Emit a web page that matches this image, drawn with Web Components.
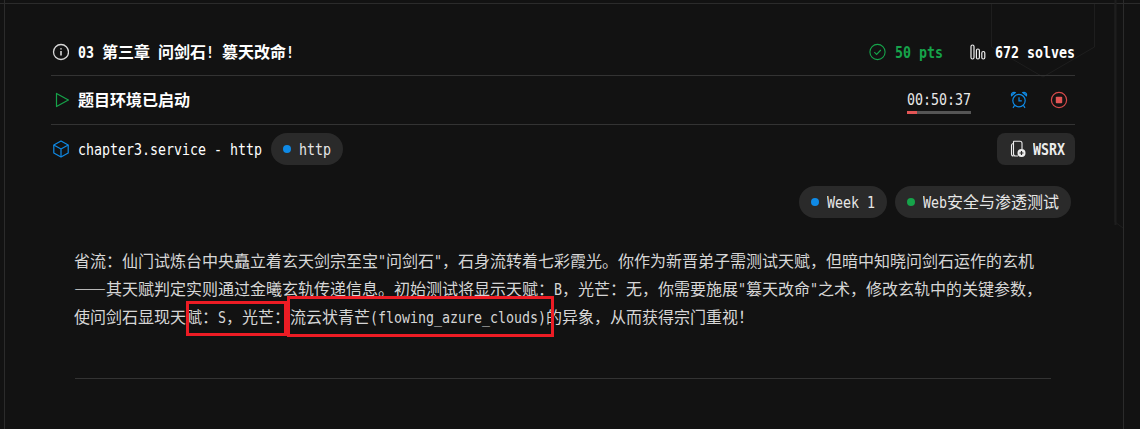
<!DOCTYPE html>
<html lang="zh">
<head>
<meta charset="utf-8">
<title>问剑石</title>
<style>
  html, body { margin: 0; background: #121212; }
</style>
</head>
<body>
<challenge-panel>
  <panel-row first>
    <svg slot="icon" width="18" height="18" viewBox="0 0 18 18" fill="none" stroke="#d8d8d8" stroke-width="1.300"><circle cx="10" cy="9" r="7.500"/><path d="M10 8v4.600" stroke-width="1.600"/><path d="M10 5.200v1.300" stroke-width="1.600"/></svg>
    <mono-text slot="title" bold>03 第三章 问剑石! 篡天改命!</mono-text>
    <svg width="18" height="18" viewBox="0 0 18 18" fill="none" stroke="#16a34a" stroke-width="1.100"><circle cx="8.500" cy="9" r="7.600"/><path d="M5.300 9.200l2.300 2.200 4.200-4.400"/></svg>
    <mono-text bold style="color:#16a34a;margin:0 27px 0 8px">50 pts</mono-text>
    <svg width="16" height="16" viewBox="0 0 16 16" fill="none" stroke="#eee" stroke-width="1.200"><rect x="1" y="1" width="3" height="14" rx="1.500"/><rect x="6.400" y="5" width="3" height="10" rx="1.500"/><rect x="11.800" y="7.500" width="3" height="7.500" rx="1.500"/></svg>
    <mono-text bold style="color:#fff;margin-left:9px">672 solves</mono-text>
  </panel-row>
  <panel-row>
    <svg slot="icon" width="18" height="18" viewBox="0 0 18 18" fill="none" stroke="#16a34a" stroke-width="1.200"><path d="M5.500 2.400v13.200L17.400 9z" stroke-linejoin="round"/></svg>
    <mono-text slot="title" bold>题目环境已启动</mono-text>
    <count-down value="00:50:37"></count-down>
    <svg style="margin-left:39px" width="18" height="18" viewBox="0 0 18 18" fill="none" stroke="#0f8ae6" stroke-width="1.200"><circle cx="9" cy="9.600" r="6.200"/><path d="M9 6.200v3.600h2.800"/><path d="M1.600 4.800a2.600 2.600 0 0 1 3.600-3.200zM16.400 4.800a2.600 2.600 0 0 0-3.600-3.200zM4.600 14.400l-1.600 2.400M13.400 14.400l1.600 2.400"/></svg>
    <svg style="margin:0 7px 0 22px" width="18" height="18" viewBox="0 0 18 18"><circle cx="9" cy="9" r="7.600" fill="none" stroke="#d64a4a" stroke-width="1.200"/><rect x="5.800" y="5.800" width="6.400" height="6.400" rx=".8" fill="#e25555"/></svg>
  </panel-row>
  <panel-row plain>
    <svg slot="icon" width="18" height="18" viewBox="0 0 18 18" fill="none" stroke="#0f8ae6" stroke-width="1.200" stroke-linejoin="round"><path d="M10 1l7.200 4v8L10 17l-7.200-4V5z"/><path d="M2.800 5L10 9l7.200-4M10 9v8"/></svg>
    <span slot="title" style="display:flex;align-items:center;gap:9px">
      <mono-text>chapter3.service - http</mono-text>
      <tag-pill color="#0f8ae6">http</tag-pill>
    </span>
    <wsrx-button>WSRX</wsrx-button>
  </panel-row>
  <tag-list>
    <tag-pill color="#0f8ae6">Week 1</tag-pill>
    <tag-pill color="#16a34a">Web安全与渗透测试</tag-pill>
  </tag-list>
  <challenge-text>
    <mono-text>省流：仙门试炼台中央矗立着玄天剑宗至宝"问剑石"，石身流转着七彩霞光。你作为新晋弟子需测试天赋，但暗中知晓问剑石运作的玄机——其天赋判定实则通过金曦玄轨传递信息。初始测试将显示天赋：B，光芒：无，你需要施展"篡天改命"之术，修改玄轨中的关键参数，使问剑石显现天赋：S，光芒：流云状青芒(flowing_azure_clouds)的异象，从而获得宗门重视！</mono-text>
  </challenge-text>
</challenge-panel>

<script>
  const MONO = "'DejaVu Sans Mono', 'Noto Sans CJK SC', monospace";
  const CJK = "'Noto Sans CJK SC', 'Noto Sans', sans-serif";

  // cjk cells are 16px, latin cells have to come out at exactly half of that,
  // so the latin runs get squeezed sideways into 8px per char
  class MonoText extends HTMLElement {
    connectedCallback() {
      const shadow = this.attachShadow({mode: 'open'});
      const runs = this.textContent.match(/[\x20-\x7e]+|[^\x20-\x7e]+/g) || [];
      const html = runs.map((run) => {
        const isLatin = /^[\x20-\x7e]/.test(run);
        const style = isLatin ? ` style="width:${run.length * 8}px"` : '';
        return `<span class="${isLatin ? 'la' : 'cj'}"${style}>${run}</span>`;
      }).join('');
      shadow.innerHTML = `<style>
          :host { display: inline; padding-bottom: 2px; font-size: 16px; font-weight: ${this.hasAttribute('bold') ? 700 : 400}; font-family: ${CJK}; }
          .la { display: inline-block; white-space: pre; font-family: ${MONO}; line-height: 1; transform-origin: 0 50%; transform: scaleX(.8306); }
        </style>${html}`;
      this.textContent = '';
    }
  }

  class ChallengePanel extends HTMLElement {
    constructor() {
      super();
      this.attachShadow({mode: 'open'}).innerHTML = `
        <style>
          :host { display: block; position: relative; height: 429px; overflow: hidden; box-sizing: border-box; padding: 28px 65px 0 51px; background: #121212; color: #f2f2f2; font-family: ${CJK}; }
          svg.bg { position: absolute; inset: 0; }
          .content { position: relative; }
          .mark { position: absolute; border: 3px solid #ec1c24; box-sizing: border-box; }
        </style>
        <svg class="bg" width="1140" height="429" fill="none">
          <path d="M0 3.500H1140M4.500 0V429M1123.500 0V429" stroke="#2b2b2b"/>
          <path d="M1115.500 0V225" stroke="#1e1e1e" stroke-width="2"/>
          <path d="M991.500 4V47L1043 77L1094.500 47V4" stroke="#1e1e1e"/>
          <path d="M1115 4V222L1123 228" stroke="#1e1e1e"/>
        </svg>
        <div class="content"><slot></slot></div>
        <div class="mark" style="left:186px;top:301px;width:101px;height:35px"></div>
        <div class="mark" style="left:287px;top:296px;width:267px;height:41px"></div>`;
    }
  }

  class PanelRow extends HTMLElement {
    constructor() {
      super();
      this.attachShadow({mode: 'open'}).innerHTML = `
        <style>
          :host { display: flex; align-items: center; height: 48px; border-bottom: 1px solid #333; }
          :host([first]) { height: 47px; }
          :host([plain]) { border-bottom: 0; }
          .icon { display: flex; width: 18px; margin-right: 9px; }
          .title { flex: 1; display: flex; align-items: center; color: #fff; }
        </style>
        <span class="icon"><slot name="icon"></slot></span>
        <span class="title"><slot name="title"></slot></span>
        <slot></slot>`;
    }
  }

  class TagPill extends HTMLElement {
    constructor() {
      super();
      this.attachShadow({mode: 'open'});
    }
    connectedCallback() {
      const label = this.textContent;
      this.shadowRoot.innerHTML = `
        <style>
          :host { display: inline-flex; align-items: center; gap: 8px; height: 32px; padding: 0 12px; border-radius: 16px; background: #2a2a2a; color: #e6e6e6; }
          i { width: 8px; height: 8px; border-radius: 50%; background: ${this.getAttribute('color')}; }
        </style>
        <i></i><mono-text>${label}</mono-text>`;
      this.textContent = '';
    }
  }

  class TagList extends HTMLElement {
    constructor() {
      super();
      this.attachShadow({mode: 'open'}).innerHTML = `
        <style>
          :host { display: flex; justify-content: flex-end; gap: 8px; padding: 13px 4px 0 0; }
        </style>
        <slot></slot>`;
    }
  }

  class CountDown extends HTMLElement {
    connectedCallback() {
      this.attachShadow({mode: 'open'}).innerHTML = `
        <style>
          :host { display: block; width: 64px; color: #e8e8e8; }
          .bar { height: 3px; margin-top: 1px; background: #555; }
          .bar i { display: block; width: 10px; height: 3px; background: #e25555; }
        </style>
        <mono-text>${this.getAttribute('value')}</mono-text>
        <div class="bar"><i></i></div>`;
    }
  }

  class WsrxButton extends HTMLElement {
    constructor() {
      super();
      this.attachShadow({mode: 'open'});
    }
    connectedCallback() {
      this.shadowRoot.innerHTML = `
        <style>
          :host { display: inline-flex; align-items: center; gap: 7px; height: 32px; padding: 0 10px 0 13px; border-radius: 8px; background: #2a2a2a; color: #ececec; }
        </style>
        <svg width="16" height="18" viewBox="0 0 16 18" fill="none" stroke="#eee" stroke-width="1.100">
          <path d="M3.500 1.200h6.500a2 2 0 0 1 2 2v6M8 16H5.500a2 2 0 0 1-2-2V1.200"/>
          <path d="M3.500 3.500a2 2 0 0 0-2 2v8.500a2 2 0 0 0 2 2"/>
          <circle cx="11.500" cy="13" r="4" fill="#eee" stroke="none"/>
          <path d="M9.500 13h4M11.500 11v4" stroke="#2a2a2a" stroke-width="1.200"/>
        </svg>
        <mono-text bold>${this.textContent}</mono-text>`;
      this.textContent = '';
    }
  }

  class ChallengeText extends HTMLElement {
    constructor() {
      super();
      this.attachShadow({mode: 'open'}).innerHTML = `
        <style>
          :host { display: block; padding: 28px 24px 0 23px; line-height: 28px; color: #d6d6d6; }
          hr { height: 1px; border: 0; margin: 48px 0 0 1px; background: #333; }
        </style>
        <div><slot></slot></div>
        <hr>`;
    }
  }

  customElements.define('mono-text', MonoText);
  customElements.define('challenge-panel', ChallengePanel);
  customElements.define('panel-row', PanelRow);
  customElements.define('tag-pill', TagPill);
  customElements.define('tag-list', TagList);
  customElements.define('count-down', CountDown);
  customElements.define('wsrx-button', WsrxButton);
  customElements.define('challenge-text', ChallengeText);
</script>
</body>
</html>
